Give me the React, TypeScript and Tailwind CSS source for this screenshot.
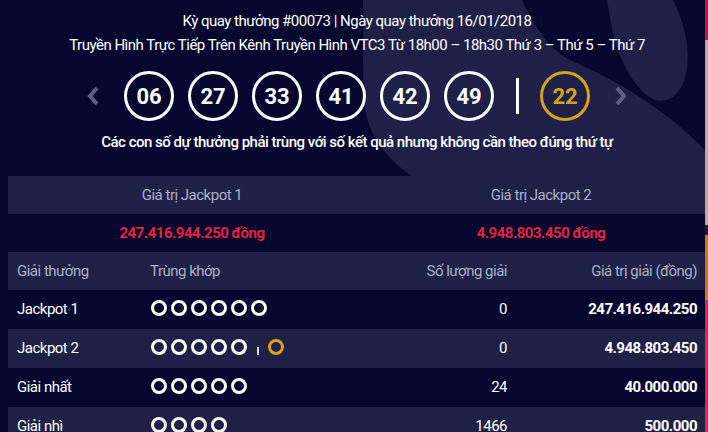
import React from 'react';

const balls = ['06', '27', '33', '41', '42', '49'];

const prizes = [
  { name: 'Jackpot 1', white: 6, gold: false, count: '0', value: '247.416.944.250' },
  { name: 'Jackpot 2', white: 5, gold: true, count: '0', value: '4.948.803.450' },
  { name: 'Giải nhất', white: 5, gold: false, count: '24', value: '40.000.000' },
  { name: 'Giải nhì', white: 4, gold: false, count: '1466', value: '500.000' },
];

function Chevron({ dir }: { dir: 'left' | 'right' }) {
  return (
    <svg width="14" height="20" viewBox="0 0 14 20" fill="none">
      <path
        d={dir === 'left' ? 'M11 2L4 10L11 18' : 'M3 2L10 10L3 18'}
        stroke="#5b5f82"
        strokeWidth="4"
        strokeLinejoin="miter"
      />
    </svg>
  );
}

function Dot({ gold }: { gold?: boolean }) {
  return (
    <span
      className={`w-[16px] h-[16px] rounded-full border-[3px] ${gold ? 'border-[#d6a21c]' : 'border-white'}`}
    />
  );
}

export default function App() {
  return (
    <div className="w-[708px] h-[432px] flex bg-[#05072f] overflow-hidden font-['Roboto',sans-serif]">
      <div className="w-[705px] h-full overflow-hidden relative">
        <div className="w-[714px]">
          {/* Draw header */}
          <div className="relative h-[176px]">
            <svg className="absolute inset-0" width="714" height="176" viewBox="0 0 714 176">
              <path
                d="M363 0 L522 0 C536 30 552 52 574 62 C612 78 670 110 714 160 L714 176 L412 176 C382 156 366 130 364 100 C362 60 364 30 363 0 Z"
                fill="#1e2047"
              />
              <path
                d="M607 0 L673 0 C682 18 690 42 687 68 C684 92 670 104 655 100 C636 92 620 62 613 34 Z"
                fill="#1e2047"
              />
            </svg>
            <div className="relative flex flex-col items-center pt-[10px] text-white text-[15px] tracking-[-0.5px]">
              <p className="leading-[22px]">Kỳ quay thưởng #00073 | Ngày quay thưởng 16/01/2018</p>
              <p className="leading-[22px] mt-[2px]">
                Truyền Hình Trực Tiếp Trên Kênh Truyền Hình VTC3 Từ 18h00 – 18h30 Thứ 3 – Thứ 5 – Thứ 7
              </p>
              <div className="flex items-center mt-[15px] h-[50px]">
                <Chevron dir="left" />
                <div className="flex gap-[14px] ml-[24px]">
                  {balls.map((b) => (
                    <div
                      key={b}
                      className="w-[50px] h-[50px] rounded-full border-[3px] border-white flex items-center justify-center text-[22px] font-bold tracking-normal"
                    >
                      {b}
                    </div>
                  ))}
                </div>
                <span className="w-[3px] h-[36px] bg-white ml-[22px]" />
                <div className="w-[50px] h-[50px] rounded-full border-[3px] border-[#d6a21c] text-[#d6a21c] flex items-center justify-center text-[22px] font-bold tracking-normal ml-[21px]">
                  22
                </div>
                <div className="ml-[24px]">
                  <Chevron dir="right" />
                </div>
              </div>
              <p className="leading-[20px] mt-[11px] font-medium">
                Các con số dự thưởng phải trùng với số kết quả nhưng không cần theo đúng thứ tự
              </p>
            </div>
          </div>

          {/* Jackpot values */}
          <div className="ml-[8px] w-[698px] text-[15px] tracking-[-0.5px]">
            <div className="grid grid-cols-[368px_330px] h-[38px] items-center bg-[#1f2046] text-[#aab0c8]">
              <div className="text-center">Giá trị Jackpot 1</div>
              <div className="text-center">Giá trị Jackpot 2</div>
            </div>
            <div className="grid grid-cols-[368px_330px] h-[38px] items-center text-[#e5223f] font-bold">
              <div className="text-center">247.416.944.250 đồng</div>
              <div className="text-center">4.948.803.450 đồng</div>
            </div>

            {/* Prize table */}
            <div className="flex items-center h-[38px] px-[9px] bg-[#1f2046] text-[#aab0c8]">
              <div className="w-[133px]">Giải thưởng</div>
              <div className="flex-1">Trùng khớp</div>
              <div className="w-[120px] text-right">Số lượng giải</div>
              <div className="w-[190px] text-right">Giá trị giải (đồng)</div>
            </div>
            {prizes.map((p, i) => (
              <div
                key={p.name}
                className={`flex items-center h-[39px] px-[9px] text-white ${i % 2 === 1 ? 'bg-[#1f2046]' : ''}`}
              >
                <div className="w-[134px]">{p.name}</div>
                <div className="flex-1 flex items-center gap-[4px] -mt-[3px]">
                  {Array.from({ length: p.white }).map((_, k) => (
                    <Dot key={k} />
                  ))}
                  {p.gold && (
                    <>
                      <span className="w-[2px] h-[8px] bg-[#cfd9f2] ml-[6px] mr-[5px] mt-[8px]" />
                      <Dot gold />
                    </>
                  )}
                </div>
                <div className="w-[120px] text-right">{p.count}</div>
                <div className="w-[190px] text-right font-bold">{p.value}</div>
              </div>
            ))}
          </div>
        </div>
      </div>

      {/* Neighbouring page edge */}
      <div className="w-[3px] h-full flex flex-col">
        <div className="h-[40px] bg-[#c8182f]" />
        <div className="h-[185px] bg-[#b9aba4]" />
        <div className="h-[10px] bg-[#2a1a14]" />
        <div className="h-[65px] bg-[#d2741f]" />
        <div className="flex-1 bg-[#e02552]" />
      </div>
    </div>
  );
}
